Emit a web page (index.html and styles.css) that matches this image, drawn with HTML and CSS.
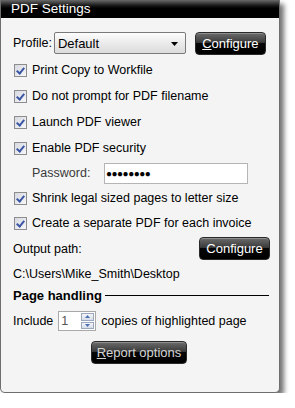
FILE: index.html
```html
<!DOCTYPE html>
<html lang="en">
<head>
    <meta charset="UTF-8">
    <title>PDF Settings</title>
    <link rel="stylesheet" href="styles.css">
</head>
<body>
    <div class="window">
        <div class="titlebar">PDF Settings</div>
        <div class="content">
            <div class="row profile-row">
                <span class="label">Profile:</span>
                <div class="select">
                    <span>Default</span>
                    <svg class="arrow" width="7" height="4" viewBox="0 0 7 4"><path d="M0 0h7L3.5 4z" fill="#000"/></svg>
                </div>
                <button class="btn btn-profile"><u>C</u>onfigure</button>
            </div>

            <label class="row check"><span class="box"></span>Print Copy to Workfile</label>
            <label class="row check"><span class="box"></span>Do not prompt for PDF filename</label>
            <label class="row check"><span class="box"></span>Launch PDF viewer</label>
            <label class="row check"><span class="box"></span>Enable PDF security</label>

            <div class="row password-row">
                <span class="pw-label">Password:</span>
                <div class="input">&#9679;&#9679;&#9679;&#9679;&#9679;&#9679;&#9679;&#9679;</div>
            </div>

            <label class="row check"><span class="box"></span>Shrink legal sized pages to letter size</label>
            <label class="row check check-last"><span class="box"></span>Create a separate PDF for each invoice</label>

            <div class="row output-row">
                <span>Output path:</span>
                <button class="btn btn-output">Configure</button>
            </div>
            <div class="row path-row">C:\Users\Mike_Smith\Desktop</div>

            <div class="section">
                <span>Page handling</span>
                <span class="rule"></span>
            </div>

            <div class="row include-row">
                <span>Include</span>
                <div class="spinner">
                    <span class="spin-value">1</span>
                    <div class="spin-btns">
                        <span class="spin-btn"><svg width="5" height="3" viewBox="0 0 5 3"><path d="M0 3h5L2.5 0z" fill="#4a6fb3"/></svg></span>
                        <span class="spin-btn"><svg width="5" height="3" viewBox="0 0 5 3"><path d="M0 0h5L2.5 3z" fill="#4a6fb3"/></svg></span>
                    </div>
                </div>
                <span>copies of highlighted page</span>
            </div>

            <div class="report-row">
                <button class="btn btn-report"><u>R</u>eport options</button>
            </div>
        </div>
    </div>
</body>
</html>
```

FILE: styles.css
```css
body {
    margin: 0;
    background: #fff;
    font-family: "Liberation Sans", Arial, sans-serif;
    font-size: 12.5px;
    color: #000;
}
.window {
    width: 278px;
    height: 392px;
    border: 1px solid #6e6e6e;
    border-top: none;
    border-radius: 0 0 5px 5px;
    background: #f4f4f4;
    box-shadow: 4px 4px 5px rgba(0,0,0,0.55);
    overflow: hidden;
}
.titlebar {
    height: 18px;
    line-height: 18px;
    padding-left: 10px;
    color: #fff;
    font-size: 13.5px;
    background: linear-gradient(#6a6a6a 0%, #1a1a1a 30%, #000 45%, #000 100%);
}
.content {
    padding: 13px 0 0 12px;
}
.row {
    display: flex;
    align-items: center;
}
.profile-row {
    height: 24px;
    margin-bottom: 2px;
}
.label {
    margin-right: 2px;
}
.select {
    width: 132px;
    height: 22px;
    box-sizing: border-box;
    border: 1px solid #7a7a7a;
    border-radius: 2px;
    background: linear-gradient(#fdfdfd, #e9e9e9 55%, #dcdcdc);
    display: flex;
    align-items: center;
    justify-content: space-between;
    padding: 0 7px 0 3px;
    font-size: 13px;
}
.arrow {
    margin-top: 1px;
}
.btn {
    font-family: "Liberation Sans", Arial, sans-serif;
    font-size: 13px;
    color: #fff;
    border: 1px solid #2a2a2a;
    border-radius: 4px;
    background: linear-gradient(#6c6c6c 0%, #3a3a3a 45%, #060606 50%, #000 100%);
    padding: 0;
    height: 23px;
    box-shadow: inset 0 1px 0 rgba(255,255,255,0.25);
}
.btn u {
    text-decoration-thickness: 1px;
}
.btn-profile {
    width: 71px;
    margin-left: 9px;
}
.check {
    height: 26px;
    color: #000;
}
.box {
    width: 11px;
    height: 11px;
    border: 1px solid #8d8d8d;
    background: linear-gradient(135deg, #d6d9e0, #f6f7f9);
    margin: 0 5px 0 1px;
    position: relative;
    flex: none;
}
.box::after {
    content: "";
    position: absolute;
    left: 3px;
    top: 1px;
    width: 3px;
    height: 6px;
    border: solid #3b56a4;
    border-width: 0 2px 2px 0;
    transform: rotate(40deg);
}
.password-row {
    height: 24px;
    padding-left: 19px;
}
.pw-label {
    color: #3a3a3a;
    width: 72px;
}
.input {
    width: 144px;
    height: 21px;
    box-sizing: border-box;
    border: 1px solid #b5b5b5;
    background: #fff;
    font-size: 10px;
    letter-spacing: -0.5px;
    display: flex;
    align-items: center;
    padding-left: 1px;
}
.check-last {
    height: 24px;
}
.output-row {
    height: 25px;
    justify-content: space-between;
    padding-right: 9px;
    margin-top: 1px;
}
.btn-output {
    width: 71px;
}
.path-row {
    height: 25px;
}
.section {
    display: flex;
    align-items: center;
    font-weight: bold;
    font-size: 13px;
    height: 18px;
    padding-right: 10px;
}
.rule {
    flex: 1;
    border-top: 1px solid #000;
    margin: 1px 0 0 3px;
}
.include-row {
    height: 22px;
    margin-top: 6px;
}
.spinner {
    width: 38px;
    height: 20px;
    box-sizing: border-box;
    border: 1px solid #a9a9a9;
    background: #fff;
    display: flex;
    margin: 0 5px 0 5px;
}
.spin-value {
    flex: 1;
    color: #555;
    padding-left: 2px;
    line-height: 18px;
}
.spin-btns {
    width: 13px;
    display: flex;
    flex-direction: column;
    padding: 1px;
    gap: 1px;
}
.spin-btn {
    flex: 1;
    border: 1px solid #9aa7bd;
    background: linear-gradient(#f4f6fa, #d6dde9);
    display: flex;
    align-items: center;
    justify-content: center;
}
.report-row {
    display: flex;
    padding-left: 78px;
    margin-top: 9px;
}
.btn-report {
    width: 96px;
    height: 23px;
    color: #d4d4d4;
}
```
